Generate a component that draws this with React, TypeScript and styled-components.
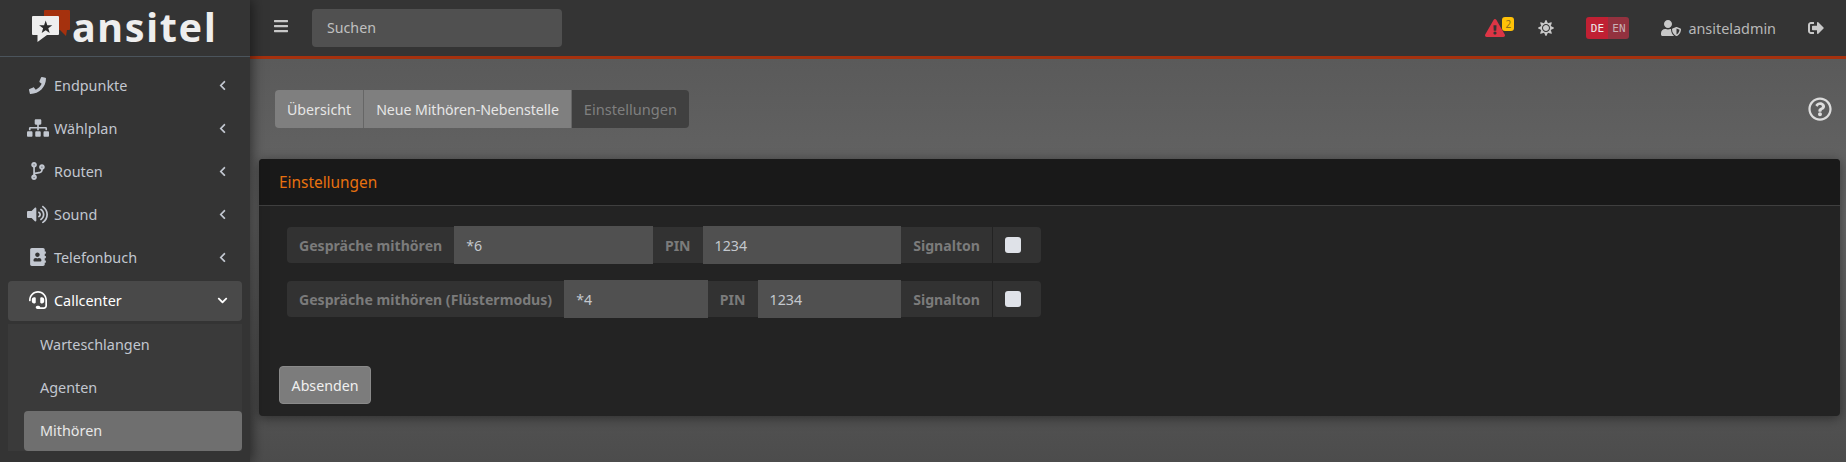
import styled, { createGlobalStyle } from "styled-components";
import {
  FaPhone,
  FaSitemap,
  FaCodeBranch,
  FaVolumeUp,
  FaAddressBook,
  FaHeadset,
  FaChevronLeft,
  FaChevronDown,
  FaBars,
  FaExclamationTriangle,
  FaSun,
  FaUserShield,
  FaSignOutAlt,
  FaRegQuestionCircle,
} from "react-icons/fa";

const GlobalStyle = createGlobalStyle`
  html, body {
    margin: 0;
    padding: 0;
    background: #5a5a5a;
    overflow: hidden;
  }
  * { box-sizing: border-box; }
  body {
    font-family: "Noto Sans", "Liberation Sans", sans-serif;
    font-size: 14.2px;
  }
`;

const Page = styled.div`
  display: flex;
  width: 1846px;
  height: 462px;
  overflow: hidden;
`;

const Sidebar = styled.aside`
  width: 250px;
  flex: none;
  background: #343434;
  box-shadow: 2px 0 12px rgba(0, 0, 0, 0.5);
  z-index: 2;
`;

const Brand = styled.div`
  height: 57px;
  border-bottom: 1px solid #4b545c;
  display: flex;
  align-items: flex-start;
  padding: 10px 0 0 32px;
  gap: 2px;
`;

const BrandName = styled.span`
  font-family: "Noto Sans", sans-serif;
  font-weight: 700;
  font-size: 39.5px;
  line-height: 34px;
  letter-spacing: 1.7px;
  color: #eeeeee;
`;

const Nav = styled.nav`
  padding: 9px 8px 0;
  display: flex;
  flex-direction: column;
`;

const NavItem = styled.div<{ $open?: boolean }>`
  height: 40px;
  margin-bottom: 3px;
  padding-bottom: 2px;
  display: flex;
  align-items: center;
  border-radius: 4px;
  color: ${(p) => (p.$open ? "#ffffff" : "#c2c7d0")};
  background: ${(p) => (p.$open ? "#494949" : "transparent")};
`;

const NavIcon = styled.span`
  width: 46px;
  flex: none;
  display: flex;
  justify-content: center;
  padding-left: 13px;
  svg {
    display: block;
  }
`;

const NavLabel = styled.span`
  flex: 1;
  font-size: 14.4px;
`;

const NavArrow = styled.span`
  width: 25px;
  flex: none;
  font-size: 11px;
  svg {
    display: block;
  }
`;

const SubNav = styled.div`
  background: #3a3a3a;
  display: flex;
  flex-direction: column;
  height: 127px;
  padding: 1px 0 0 16px;
`;

const SubItem = styled.div<{ $active?: boolean }>`
  height: 40px;
  flex: none;
  margin-bottom: 3px;
  padding: 0 0 2px 16px;
  display: flex;
  align-items: center;
  border-radius: 4px;
  font-size: 14.4px;
  color: ${(p) => (p.$active ? "#e8e8e8" : "#c2c7d0")};
  background: ${(p) => (p.$active ? "#6f6f6f" : "transparent")};
`;

const Content = styled.div`
  flex: 1;
  min-width: 0;
  display: flex;
  flex-direction: column;
`;

const TopBar = styled.header`
  height: 59px;
  flex: none;
  background: #343434;
  border-bottom: 3px solid #a5310e;
  display: flex;
  align-items: center;
  padding-left: 23px;
  color: #c8c8c8;
`;

const MenuButton = styled.span`
  font-size: 16px;
  width: 36px;
  margin: 0 3px 5px 0;
  svg {
    display: block;
  }
`;

const Search = styled.input`
  width: 250px;
  height: 38px;
  border: 0;
  border-radius: 4px;
  background: #505050;
  padding: 0 15px 2px;
  font: inherit;
  outline: none;
  &::placeholder {
    color: #c0c0c0;
    opacity: 1;
  }
`;

const TopRight = styled.div`
  margin-left: auto;
  display: flex;
  align-items: center;
`;

const AlertWrap = styled.span`
  position: relative;
  color: #dc3545;
  font-size: 20px;
  width: 20px;
  margin-right: 33px;
  svg {
    display: block;
  }
`;

const AlertBadge = styled.span`
  position: absolute;
  left: 17px;
  top: -1px;
  width: 12px;
  height: 14px;
  border-radius: 3px;
  background: #ffc107;
  color: #8a6d1a;
  font-size: 10px;
  line-height: 14px;
  text-align: center;
`;

const TopIcon = styled.span<{ $gap: number }>`
  font-size: 16px;
  color: #c8c8c8;
  margin-right: ${(p) => p.$gap}px;
  svg {
    display: block;
  }
`;

const Lang = styled.div`
  display: flex;
  height: 22px;
  border-radius: 3px;
  overflow: hidden;
  margin-right: 32px;
  font-family: "DejaVu Sans Mono", monospace;
  font-size: 11px;
`;

const LangPart = styled.span<{ $on?: boolean }>`
  width: ${(p) => (p.$on ? 22 : 21)}px;
  display: flex;
  align-items: center;
  justify-content: center;
  background: ${(p) => (p.$on ? "#c02033" : "#93323f")};
  color: ${(p) => (p.$on ? "#ececec" : "#c8b0b4")};
`;

const UserName = styled.span`
  font-size: 14.4px;
  color: #b8b8b8;
  margin: 0 32px 0 7px;
`;

const Main = styled.main`
  flex: 1;
  background: linear-gradient(#5a5a5a, #666666 40%, #4c4c4c);
  padding: 0 6px 0 9px;
`;

const TabRow = styled.div`
  height: 100px;
  display: flex;
  align-items: center;
  justify-content: space-between;
  padding: 0 8px 0 16px;
`;

const Tabs = styled.div`
  display: flex;
  height: 38px;
  border-radius: 4px;
  overflow: hidden;
`;

const Tab = styled.span<{ $disabled?: boolean; $tight?: boolean }>`
  display: flex;
  align-items: center;
  padding: 0 12px;
  font-size: ${(p) => (p.$disabled ? "14.6px" : "14.2px")};
  letter-spacing: ${(p) => (p.$tight ? "-0.08px" : "0")};
  background: ${(p) => (p.$disabled ? "#404040" : "#7f7f7f")};
  color: ${(p) => (p.$disabled ? "#7f7f7f" : "#e6e6e6")};
  & + & {
    border-left: 1px solid #666666;
  }
`;

const Help = styled.span`
  font-size: 24px;
  color: #dcdcdc;
  svg {
    display: block;
  }
`;

const Card = styled.section`
  height: 257px;
  background: #232323;
  border-radius: 4px;
  box-shadow: 0 2px 12px rgba(0, 0, 0, 0.45);
  overflow: hidden;
`;

const CardHead = styled.div`
  height: 47px;
  background: #191919;
  border-bottom: 1px solid #3f3f3f;
  display: flex;
  align-items: center;
  padding-left: 20px;
  font-size: 15.4px;
  color: #e8710f;
`;

const CardBody = styled.div`
  padding: 20px 20px 0;
`;

const FormRows = styled.div`
  width: 762px;
  padding-left: 8px;
  display: flex;
  flex-direction: column;
  gap: 16px;
`;

const Group = styled.div`
  display: flex;
  height: 38px;
  align-items: stretch;
`;

const Addon = styled.label<{ $first?: boolean; $last?: boolean }>`
  display: flex;
  flex: none;
  align-items: center;
  margin: 1px 0;
  padding: 0 12px;
  background: #323232;
  color: #7b7b7b;
  font-weight: 700;
  font-size: 14.1px;
  white-space: nowrap;
  border-radius: ${(p) =>
    p.$first ? "4px 0 0 4px" : p.$last ? "0 4px 4px 0" : "0"};
`;

const CheckAddon = styled(Addon)`
  width: 48px;
  margin-left: 1px;
  padding: 0 0 0 12px;
`;

const Box = styled.span`
  display: block;
  width: 16px;
  height: 16px;
  border-radius: 3px;
  background: #dfe2e8;
`;

const Field = styled.div`
  flex: 1;
  min-width: 0;
  display: flex;
  align-items: center;
  padding-left: 12px;
  background: #505050;
  color: #c4c8ce;
`;

const SubmitButton = styled.button`
  display: block;
  margin-top: 48px;
  height: 38px;
  width: 92px;
  padding: 0;
  background: #7c7c7c;
  border: 1px solid #8a8a8a;
  border-radius: 4px;
  color: #f0f0f0;
  font: inherit;
`;

const Logo = () => (
  <svg width="38" height="33" viewBox="0 0 38 33">
    <path d="M12 1a1 1 0 0 1 1-1h24a1 1 0 0 1 1 1v18a1 1 0 0 1-1 1h-2l-1 6-6-6H12z" fill="#a5310e" />
    <path d="M1 6h25a1 1 0 0 1 1 1v17a1 1 0 0 1-1 1H15l-9.500 7v-7H1a1 1 0 0 1-1-1V7a1 1 0 0 1 1-1z" fill="#eeeeee" />
    <path d="M13.700 10.500l1.600 4.700 5 .1-4 3 1.400 4.700-4-2.800-4 2.800 1.400-4.700-4-3 5-.1z" fill="#2b2b2b" />
  </svg>
);

const navItems = [
  { label: "Endpunkte", icon: <FaPhone size={17} /> },
  { label: "Wählplan", icon: <FaSitemap size={22} /> },
  { label: "Routen", icon: <FaCodeBranch size={18} /> },
  { label: "Sound", icon: <FaVolumeUp size={21} /> },
  { label: "Telefonbuch", icon: <FaAddressBook size={18} /> },
];

export default function App() {
  return (
    <Page>
      <GlobalStyle />
      <Sidebar>
        <Brand>
          <Logo />
          <BrandName>ansitel</BrandName>
        </Brand>
        <Nav>
          {navItems.map((item) => (
            <NavItem key={item.label}>
              <NavIcon>{item.icon}</NavIcon>
              <NavLabel>{item.label}</NavLabel>
              <NavArrow>
                <FaChevronLeft />
              </NavArrow>
            </NavItem>
          ))}
          <NavItem $open>
            <NavIcon>
              <FaHeadset size={18} />
            </NavIcon>
            <NavLabel>Callcenter</NavLabel>
            <NavArrow>
              <FaChevronDown />
            </NavArrow>
          </NavItem>
          <SubNav>
            <SubItem>Warteschlangen</SubItem>
            <SubItem>Agenten</SubItem>
            <SubItem $active>Mithören</SubItem>
          </SubNav>
        </Nav>
      </Sidebar>
      <Content>
        <TopBar>
          <MenuButton>
            <FaBars />
          </MenuButton>
          <Search placeholder="Suchen" />
          <TopRight>
            <AlertWrap>
              <FaExclamationTriangle />
              <AlertBadge>2</AlertBadge>
            </AlertWrap>
            <TopIcon $gap={32}>
              <FaSun />
            </TopIcon>
            <Lang>
              <LangPart $on>DE</LangPart>
              <LangPart>EN</LangPart>
            </Lang>
            <TopIcon $gap={0}>
              <FaUserShield size={20} />
            </TopIcon>
            <UserName>ansiteladmin</UserName>
            <TopIcon $gap={22}>
              <FaSignOutAlt />
            </TopIcon>
          </TopRight>
        </TopBar>
        <Main>
          <TabRow>
            <Tabs>
              <Tab>Übersicht</Tab>
              <Tab $tight>Neue Mithören-Nebenstelle</Tab>
              <Tab $disabled>Einstellungen</Tab>
            </Tabs>
            <Help>
              <FaRegQuestionCircle />
            </Help>
          </TabRow>
          <Card>
            <CardHead>Einstellungen</CardHead>
            <CardBody>
              <FormRows>
                <Group>
                  <Addon $first>Gespräche mithören</Addon>
                  <Field>*6</Field>
                  <Addon>PIN</Addon>
                  <Field>1234</Field>
                  <Addon>Signalton</Addon>
                  <CheckAddon $last>
                    <Box />
                  </CheckAddon>
                </Group>
                <Group>
                  <Addon $first>Gespräche mithören (Flüstermodus)</Addon>
                  <Field>*4</Field>
                  <Addon>PIN</Addon>
                  <Field>1234</Field>
                  <Addon>Signalton</Addon>
                  <CheckAddon $last>
                    <Box />
                  </CheckAddon>
                </Group>
              </FormRows>
              <SubmitButton>Absenden</SubmitButton>
            </CardBody>
          </Card>
        </Main>
      </Content>
    </Page>
  );
}
